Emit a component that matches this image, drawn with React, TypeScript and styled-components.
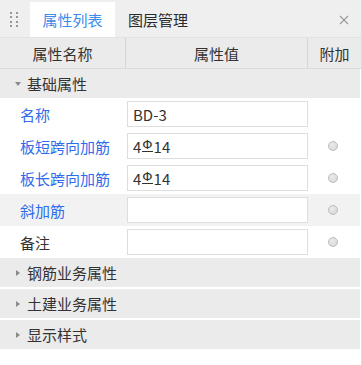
import styled, { createGlobalStyle } from "styled-components";

const GlobalStyle = createGlobalStyle`
  html, body {
    margin: 0;
    padding: 0;
    background: #ffffff;
  }
  * {
    box-sizing: border-box;
  }
`;

const Panel = styled.div`
  width: 362px;
  height: 365px;
  background: #ffffff;
  border-right: 1px solid #dcdcdc;
  font-family: "Noto Sans CJK SC", "Noto Sans", sans-serif;
  font-size: 15px;
  color: #333333;
  overflow: hidden;
`;

const TabBar = styled.div`
  height: 38px;
  background: #efefef;
  display: flex;
  align-items: flex-end;
  border-bottom: 1px solid #e2e2e2;
`;

const Handle = styled.div`
  width: 30px;
  height: 35px;
  display: flex;
  align-items: center;
  justify-content: center;
  padding-right: 3px;
`;

const Dots = styled.div`
  display: grid;
  grid-template-columns: 2px 2px;
  grid-auto-rows: 2px;
  column-gap: 4px;
  row-gap: 2.5px;
  span {
    background: #9a9a9a;
  }
`;

const Tab = styled.div<{ $active?: boolean }>`
  height: 35px;
  padding: 0 12px;
  display: flex;
  align-items: center;
  background: ${({ $active }) => ($active ? "#ffffff" : "transparent")};
  color: ${({ $active }) => ($active ? "#3d8bea" : "#2b2b2b")};
  width: ${({ $active }) => ($active ? "85px" : "auto")};
  justify-content: center;
  margin-right: ${({ $active }) => ($active ? "1px" : "0")};
`;

const Close = styled.div`
  margin-left: auto;
  margin-right: 12px;
  height: 35px;
  display: flex;
  align-items: center;
`;

const HeaderRow = styled.div`
  display: grid;
  grid-template-columns: 126px 182px 1fr;
  height: 31px;
  background: #ebebeb;
  border-bottom: 1px solid #dadada;
`;

const HeaderCell = styled.div<{ $last?: boolean }>`
  display: flex;
  align-items: center;
  justify-content: center;
  color: #333333;
  border-right: ${({ $last }) => ($last ? "none" : "1px solid #d6d6d6")};
`;

const GroupRow = styled.div<{ $gap?: boolean }>`
  height: 29px;
  background: #ebebeb;
  display: flex;
  align-items: center;
  padding-left: 12px;
  margin-top: ${({ $gap }) => ($gap ? "2px" : "0")};
  margin-right: 1px;
  color: #333333;
`;

const Caret = styled.span<{ $open?: boolean }>`
  width: 12px;
  margin-right: 3px;
  display: inline-flex;
  justify-content: center;
  &::before {
    content: "";
    border-style: solid;
    border-color: transparent;
    ${({ $open }) =>
      $open
        ? "border-width: 4px 3px 0 3px; border-top-color: #8a8a8a;"
        : "border-width: 3px 0 3px 4px; border-left-color: #8a8a8a;"}
  }
`;

const PropRow = styled.div<{ $hover?: boolean }>`
  display: grid;
  grid-template-columns: 127px 181px 1fr;
  height: 32px;
  align-items: center;
  background: ${({ $hover }) => ($hover ? "#f2f2f2" : "#ffffff")};
  margin-right: 1px;
`;

const Label = styled.div<{ $blue?: boolean }>`
  padding-left: 20px;
  color: ${({ $blue }) => ($blue ? "#2f6cea" : "#333333")};
  white-space: nowrap;
`;

const ValueBox = styled.div`
  height: 26px;
  border: 1px solid #dedede;
  background: #ffffff;
  padding-left: 5px;
  display: flex;
  align-items: center;
  color: #333333;
`;

const Steel = styled.span`
  font-family: "DejaVu Sans", sans-serif;
  font-size: 13px;
  margin: 0 1px;
  border-bottom: 1.5px solid #333333;
  line-height: 12px;
  display: inline-block;
  transform: translateY(-1px);
`;

const Extra = styled.div`
  display: flex;
  justify-content: center;
  padding-right: 2px;
`;

const Radio = styled.span`
  width: 10px;
  height: 10px;
  border-radius: 50%;
  border: 1px solid #bdbdbd;
  background: radial-gradient(circle at 40% 35%, #ececec, #d2d2d2);
`;

type Prop = {
  label: string;
  value?: string;
  steel?: boolean;
  blue?: boolean;
  radio?: boolean;
  hover?: boolean;
};

const props: Prop[] = [
  { label: "名称", value: "BD-3", blue: true },
  { label: "板短跨向加筋", value: "14", steel: true, blue: true, radio: true },
  { label: "板长跨向加筋", value: "14", steel: true, blue: true, radio: true },
  { label: "斜加筋", blue: true, radio: true, hover: true },
  { label: "备注", radio: true },
];

const groups = ["钢筋业务属性", "土建业务属性", "显示样式"];

const App = () => {
  return (
    <>
      <GlobalStyle />
      <Panel>
        <TabBar>
          <Handle>
            <Dots>
              {Array.from({ length: 8 }).map((_, i) => (
                <span key={i} />
              ))}
            </Dots>
          </Handle>
          <Tab $active>属性列表</Tab>
          <Tab>图层管理</Tab>
          <Close>
            <svg width="10" height="10" viewBox="0 0 10 10">
              <path d="M1 1 L9 9 M9 1 L1 9" stroke="#9a9a9a" strokeWidth="1.1" />
            </svg>
          </Close>
        </TabBar>

        <HeaderRow>
          <HeaderCell>属性名称</HeaderCell>
          <HeaderCell>属性值</HeaderCell>
          <HeaderCell $last>附加</HeaderCell>
        </HeaderRow>

        <GroupRow>
          <Caret $open />
          基础属性
        </GroupRow>

        {props.map((p) => (
          <PropRow key={p.label} $hover={p.hover}>
            <Label $blue={p.blue}>{p.label}</Label>
            <ValueBox>
              {p.steel ? (
                <>
                  4<Steel>Φ</Steel>
                  {p.value}
                </>
              ) : (
                p.value
              )}
            </ValueBox>
            <Extra>{p.radio && <Radio />}</Extra>
          </PropRow>
        ))}

        {groups.map((g, i) => (
          <GroupRow key={g} $gap={i > 0}>
            <Caret />
            {g}
          </GroupRow>
        ))}
      </Panel>
    </>
  );
};

export default App;
